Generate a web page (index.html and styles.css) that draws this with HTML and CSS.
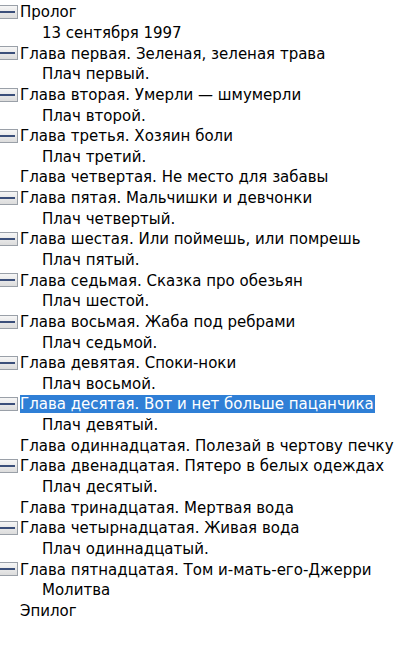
FILE: index.html
```html
<!DOCTYPE html>
<html lang="ru">
<head>
<meta charset="utf-8">
<link rel="stylesheet" href="styles.css">
</head>
<body>
<ul class="tree">
  <li class="row top"><span class="tog"></span><span class="t">Пролог</span></li>
  <li class="row sub"><span class="t">13 сентября 1997</span></li>
  <li class="row top"><span class="tog"></span><span class="t">Глава первая. Зеленая, зеленая трава</span></li>
  <li class="row sub"><span class="t">Плач первый.</span></li>
  <li class="row top"><span class="tog"></span><span class="t">Глава вторая. Умерли — шмумерли</span></li>
  <li class="row sub"><span class="t">Плач второй.</span></li>
  <li class="row top"><span class="tog"></span><span class="t">Глава третья. Хозяин боли</span></li>
  <li class="row sub"><span class="t">Плач третий.</span></li>
  <li class="row top"><span class="t">Глава четвертая. Не место для забавы</span></li>
  <li class="row top"><span class="tog"></span><span class="t">Глава пятая. Мальчишки и девчонки</span></li>
  <li class="row sub"><span class="t">Плач четвертый.</span></li>
  <li class="row top"><span class="tog"></span><span class="t">Глава шестая. Или поймешь, или помрешь</span></li>
  <li class="row sub"><span class="t">Плач пятый.</span></li>
  <li class="row top"><span class="tog"></span><span class="t">Глава седьмая. Сказка про обезьян</span></li>
  <li class="row sub"><span class="t">Плач шестой.</span></li>
  <li class="row top"><span class="tog"></span><span class="t">Глава восьмая. Жаба под ребрами</span></li>
  <li class="row sub"><span class="t">Плач седьмой.</span></li>
  <li class="row top"><span class="tog"></span><span class="t">Глава девятая. Споки-ноки</span></li>
  <li class="row sub"><span class="t">Плач восьмой.</span></li>
  <li class="row top"><span class="tog"></span><span class="t sel">Глава десятая. Вот и нет больше пацанчика</span></li>
  <li class="row sub"><span class="t">Плач девятый.</span></li>
  <li class="row top"><span class="t">Глава одиннадцатая. Полезай в чертову печку</span></li>
  <li class="row top"><span class="tog"></span><span class="t">Глава двенадцатая. Пятеро в белых одеждах</span></li>
  <li class="row sub"><span class="t">Плач десятый.</span></li>
  <li class="row top"><span class="t">Глава тринадцатая. Мертвая вода</span></li>
  <li class="row top"><span class="tog"></span><span class="t">Глава четырнадцатая. Живая вода</span></li>
  <li class="row sub"><span class="t">Плач одиннадцатый.</span></li>
  <li class="row top"><span class="tog"></span><span class="t">Глава пятнадцатая. Том и-мать-его-Джерри</span></li>
  <li class="row sub"><span class="t">Молитва</span></li>
  <li class="row top"><span class="t">Эпилог</span></li>
</ul>
</body>
</html>
```
FILE: styles.css
```css
html, body {
  margin: 0;
  padding: 0;
  background: #ffffff;
}
body {
  font-family: "DejaVu Sans", "Liberation Sans", sans-serif;
  font-size: 15px;
  color: #000000;
}
.tree {
  list-style: none;
  margin: 0;
  padding: 2px 0 0 0;
}
.row {
  position: relative;
  display: flex;
  align-items: center;
  height: 20.65px;
  padding-left: 20px;
  white-space: nowrap;
}
.row.sub {
  padding-left: 42px;
}
.t {
  line-height: 18px;
}
.t.sel {
  background: #2f7fd6;
  color: #ffffff;
  padding-right: 1px;
}
.tog {
  position: absolute;
  left: 0;
  top: 3px;
  width: 17px;
  height: 12px;
  border: 1px solid #9aa0a8;
  border-left: none;
  background: linear-gradient(#f6f6f6, #dcdcdc);
}
.tog::after {
  content: "";
  position: absolute;
  left: 0;
  right: 2px;
  top: 5px;
  height: 2px;
  background: #3b4f7a;
}
```
